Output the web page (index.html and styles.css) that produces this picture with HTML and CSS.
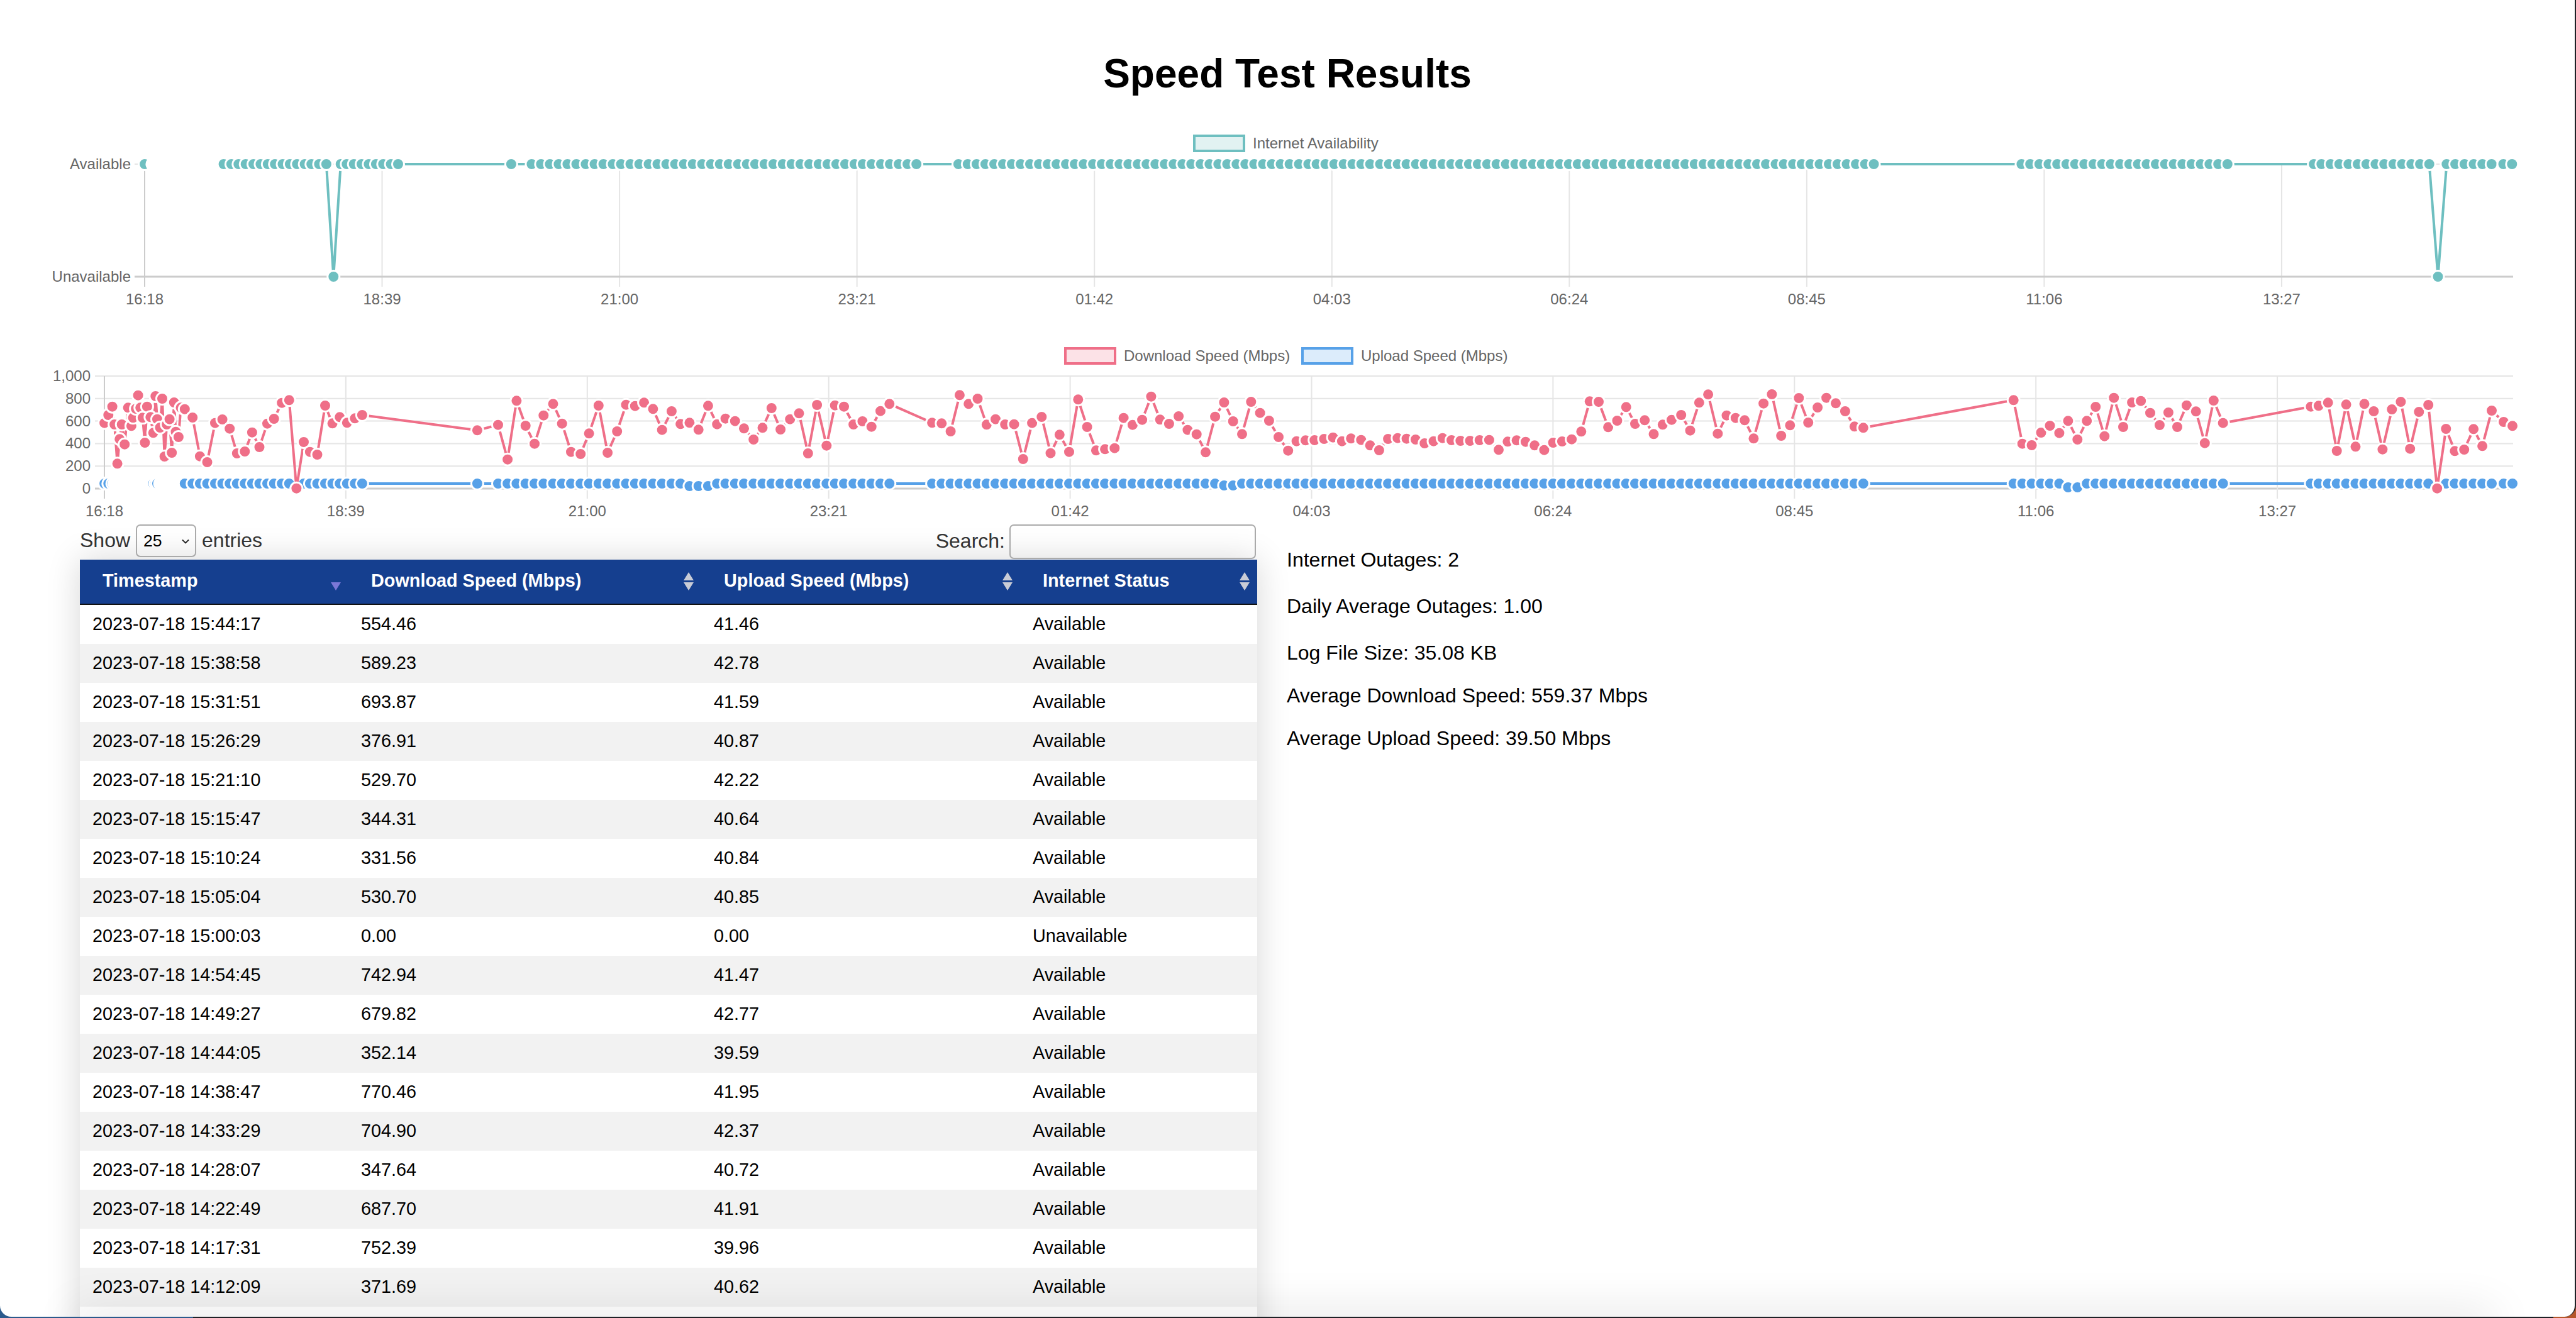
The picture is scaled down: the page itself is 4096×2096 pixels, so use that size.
FILE: index.html
```html
<!DOCTYPE html>
<html lang="en">
<head>
    <meta charset="UTF-8">
    <title>Speed Test Results</title>
    <link rel="stylesheet" href="styles.css">
</head>
<body>
    <div class="window">
        <h1>Speed Test Results</h1>

        <div id="availabilityChart" class="chart chart-availability"></div>
        <div id="speedChart" class="chart chart-speed"></div>

        <div class="content">
            <div class="results">
                <div class="results-top">
                    <label class="results-length">Show
                        <span class="select-wrap">
                            <select>
                                <option>25</option>
                                <option>50</option>
                                <option>100</option>
                            </select>
                            <svg class="select-arrow" viewBox="0 0 12 8" width="12" height="8"><path d="M1 1.5 L6 6.5 L11 1.5" fill="none" stroke="#222" stroke-width="1.8"/></svg>
                        </span>
                        entries</label>
                    <label class="results-search">Search: <input type="search"></label>
                </div>
                <table class="results-table">
                    <colgroup>
                        <col class="col-time">
                        <col class="col-download">
                        <col class="col-upload">
                        <col class="col-status">
                    </colgroup>
                    <thead>
                        <tr>
                            <th class="sorted">Timestamp</th>
                            <th>Download Speed (Mbps)</th>
                            <th>Upload Speed (Mbps)</th>
                            <th>Internet Status</th>
                        </tr>
                    </thead>
                    <tbody>
                        <tr><td>2023-07-18 15:44:17</td><td>554.46</td><td>41.46</td><td>Available</td></tr>
                        <tr><td>2023-07-18 15:38:58</td><td>589.23</td><td>42.78</td><td>Available</td></tr>
                        <tr><td>2023-07-18 15:31:51</td><td>693.87</td><td>41.59</td><td>Available</td></tr>
                        <tr><td>2023-07-18 15:26:29</td><td>376.91</td><td>40.87</td><td>Available</td></tr>
                        <tr><td>2023-07-18 15:21:10</td><td>529.70</td><td>42.22</td><td>Available</td></tr>
                        <tr><td>2023-07-18 15:15:47</td><td>344.31</td><td>40.64</td><td>Available</td></tr>
                        <tr><td>2023-07-18 15:10:24</td><td>331.56</td><td>40.84</td><td>Available</td></tr>
                        <tr><td>2023-07-18 15:05:04</td><td>530.70</td><td>40.85</td><td>Available</td></tr>
                        <tr><td>2023-07-18 15:00:03</td><td>0.00</td><td>0.00</td><td>Unavailable</td></tr>
                        <tr><td>2023-07-18 14:54:45</td><td>742.94</td><td>41.47</td><td>Available</td></tr>
                        <tr><td>2023-07-18 14:49:27</td><td>679.82</td><td>42.77</td><td>Available</td></tr>
                        <tr><td>2023-07-18 14:44:05</td><td>352.14</td><td>39.59</td><td>Available</td></tr>
                        <tr><td>2023-07-18 14:38:47</td><td>770.46</td><td>41.95</td><td>Available</td></tr>
                        <tr><td>2023-07-18 14:33:29</td><td>704.90</td><td>42.37</td><td>Available</td></tr>
                        <tr><td>2023-07-18 14:28:07</td><td>347.64</td><td>40.72</td><td>Available</td></tr>
                        <tr><td>2023-07-18 14:22:49</td><td>687.70</td><td>41.91</td><td>Available</td></tr>
                        <tr><td>2023-07-18 14:17:31</td><td>752.39</td><td>39.96</td><td>Available</td></tr>
                        <tr><td>2023-07-18 14:12:09</td><td>371.69</td><td>40.62</td><td>Available</td></tr>
                        <tr class="row-cut"><td></td><td></td><td></td><td></td></tr>
                    </tbody>
                </table>
            </div>

            <div class="stats">
                <p class="stat-wide">Internet Outages: 2</p>
                <p class="stat-wide">Daily Average Outages: 1.00</p>
                <p>Log File Size: 35.08 KB</p>
                <p>Average Download Speed: 559.37 Mbps</p>
                <p>Average Upload Speed: 39.50 Mbps</p>
            </div>
        </div>
    </div>

    <script src="charts.js"></script>
</body>
</html>
```
FILE: styles.css
```css
html, body {
    height: 100%;
}

body {
    margin: 0;
    overflow: hidden;
    font-family: "Liberation Sans", Arial, sans-serif;
    font-size: 32px;
    color: #000;
    /* desktop behind the window, seen at the corners and along the bottom */
    background: linear-gradient(90deg, #2b5a8c 0 307px, #1e2126 307px 4060px, #b5562a 4060px);
}

.window {
    position: relative;
    box-sizing: border-box;
    width: 4096px;
    height: 2094px;
    overflow: hidden;
    background-color: #fff;
    border-right: 2px solid #1e2126;
    border-radius: 0 0 18px 18px;
}

/* shadow from whatever sits just under the window */
.window::after {
    content: "";
    position: absolute;
    top: 100%;
    left: 120px;
    right: 130px;
    height: 20px;
    box-shadow: 0 0 70px rgba(0, 0, 0, 0.22);
}

h1 {
    margin: 0;
    padding-top: 80px;
    font-size: 64px;
    line-height: 74px;
    text-align: center;
}

.chart svg {
    display: block;
}

.chart text {
    font-family: "Liberation Sans", Arial, sans-serif;
    font-size: 24px;
    fill: #666;
}

.chart-availability {
    margin-top: 46px;
    height: 320px;
}

.chart-speed {
    margin-top: 20px;
    height: 294px;
}

.content {
    display: flex;
    gap: 47px;
    padding-left: 127px;
}

.results {
    width: 1872px;
    flex: none;
}

.results-top {
    display: flex;
    justify-content: space-between;
    height: 56px;
    color: #333;
}

.results-length {
    display: flex;
    align-items: flex-start;
    gap: 9px;
    line-height: 50px;
}

.select-wrap {
    position: relative;
    display: block;
}

.select-wrap select {
    display: block;
    box-sizing: border-box;
    width: 96px;
    height: 52px;
    padding: 0 0 0 10px;
    appearance: none;
    background: transparent;
    border: 2px solid #aaa;
    border-radius: 7px;
    font-family: inherit;
    font-size: 26.67px;
    color: #000;
}

.select-arrow {
    position: absolute;
    top: 23px;
    left: 73px;
}

.results-search {
    display: flex;
    align-items: flex-start;
    gap: 7px;
    line-height: 52px;
}

.results-search input {
    box-sizing: border-box;
    width: 392px;
    height: 55px;
    margin-right: 2px;
    background: transparent;
    border: 2px solid #aaa;
    border-radius: 7px;
}

.results-table {
    width: 100%;
    table-layout: fixed;
    border-collapse: separate;
    border-spacing: 0;
    font-size: 28.8px;
    box-shadow: 0 0 50px rgba(0, 0, 0, 0.16);
}

.col-time { width: 427px; }
.col-download { width: 561px; }
.col-upload { width: 507px; }
.col-status { width: 377px; }

.results-table th {
    position: relative;
    box-sizing: border-box;
    height: 72px;
    padding: 0 36px 4px;
    background-color: #153f8f;
    border-bottom: 2px solid #111;
    color: #fff;
    text-align: left;
}

.results-table th::before,
.results-table th::after {
    content: "";
    position: absolute;
    right: 12px;
    border-left: 8px solid transparent;
    border-right: 8px solid transparent;
}

.results-table th::before {
    top: 20px;
    border-bottom: 13px solid #c9ccd6;
}

.results-table th::after {
    top: 36px;
    border-top: 13px solid #c9ccd6;
}

.results-table th.sorted::before {
    display: none;
}

.results-table th.sorted::after {
    border-top-color: #7b78d8;
}

.results-table td {
    box-sizing: border-box;
    height: 62px;
    padding: 0 20px 2px;
    background-color: #fff;
}

.results-table tbody tr:nth-child(even) td {
    background-color: #f2f2f2;
}

.results-table .row-cut td {
    background-color: #fff;
}

.stats {
    padding-top: 38px;
}

.stats p {
    margin: 0 0 31px;
    line-height: 37px;
}

.stats .stat-wide {
    margin-bottom: 37px;
}
```
FILE: charts.js
```javascript
// Each stretch has its own left edge and px scale, y values are 3x the px offset from 520.
var stretches = [
    { left: 0, scale: 1.12, points: [
        [186,458],[193,420],[200,380],[204,465],[209,652],[213,535],[217,465],[222,560],[228,385],[234,472],
        [237,433],[242,390],[246,326],[250,385],[254,433],[258,552],[262,380],[268,430],[273,505],[277,330],
        [280,440],[285,480],[289,342],[293,618],[297,465],[302,440],[306,600],[310,360],[313,500],[318,525],
        [322,385],[329,392],[343,432],[356,617],[369,645],[383,458],[396,441],[409,485],[422,603],[436,594],
        [449,503],[462,573],[476,461],[488,438],[502,362],[515,349],[528,770],[541,549],[552,596],[565,609],
        [579,375],[592,460],[605,430],[618,457],[632,436],[645,420],[850,493],[887,467],[904,632],[920,352],
        [936,471],[952,557],[968,422],[985,367],[1001,461],[1017,596],[1034,606],[1049,508],[1066,375],[1082,600],
        [1099,498],[1115,371],[1131,377],[1147,361],[1163,391],[1179,491],[1196,402],[1212,463],[1228,457],[1244,490],
        [1261,376],[1277,464],[1292,437],[1309,449],[1325,484],[1342,537],[1358,481],[1374,387],[1390,489],[1407,440],
        [1423,412],[1439,603],[1455,372],[1472,566],[1487,374],[1503,380],[1520,465],[1536,450],[1552,476],[1568,401]
    ] },
    { left: 1400, scale: 1.12, points: [
        [16,367],[92,457],[109,460],[125,498],[141,325],[157,367],[173,342],[189,466],[205,440],[222,465],
        [238,464],[254,630],[270,458],[287,429],[303,602],[319,514],[336,596],[352,346],[368,477],[384,589],
        [400,583],[417,578],[433,434],[449,467],[466,443],[482,332],[498,442],[514,462],[531,426],[547,491],
        [563,512],[579,598],[596,428],[612,360],[628,450],[644,511],[660,357],[676,410],[692,447],[709,525],
        [726,590],[741,545],[757,541],[773,540],[790,534],[806,527],[822,545],[838,532],[856,539],[872,565],
        [888,588],[904,534],[921,530],[937,533],[953,537],[969,555],[985,545],[1001,530],[1017,540],[1033,543],
        [1050,543],[1067,540],[1084,539],[1101,586],[1117,547],[1133,541],[1149,548],[1165,565],[1182,587],[1198,552],
        [1214,546],[1231,536],[1248,499],[1263,355],[1279,357],[1296,478],[1312,447],[1328,382],[1344,462],[1361,445],
        [1377,511],[1393,466],[1409,443],[1426,420],[1442,494],[1458,361],[1474,322],[1491,509],[1507,422],[1523,434],
        [1539,445],[1555,532]
    ] },
    { left: 2800, scale: 1.21, points: [
        [5,365],[21,321],[39,519],[56,469],[73,339],[91,456],[109,384],[126,338],[144,364],[162,402],
        [180,475],[197,481],[486,349],[503,557],[521,564],[539,504],[556,471],[574,506],[591,448],[609,537],
        [627,448],[644,381],[661,521],[679,338],[697,477],[714,360],[731,353],[749,410],[767,468],[784,408],
        [801,477],[819,374],[837,403],[854,554],[871,351],[889,458],[1058,380],[1073,376],[1091,361],[1108,591],
        [1126,370],[1144,571],[1161,367],[1179,402],[1196,584],[1214,393],[1231,357],[1249,581],[1266,405],[1284,372],
        [1301,770],[1318,486],[1335,592],[1353,585],[1371,487],[1388,568],[1406,399],[1429,453],[1446,472]
    ] }
];

var TEAL = '#6ebfc0';
var PINK = '#ef6f88';
var BLUE = '#57a1e8';
var GRID = '#e5e5e5';
var AXIS = '#cccccc';
var TIMES = ['16:18', '18:39', '21:00', '23:21', '01:42', '04:03', '06:24', '08:45', '11:06', '13:27'];

// the first few minutes of the log drew as blank dots
var BLANK_UNTIL = 288;

var samples = [];
stretches.forEach(function (s) {
    s.points.forEach(function (p) {
        samples.push({ x: s.left + p[0] / s.scale, y: 520 + p[1] / 3 });
    });
});

function line(x1, y1, x2, y2, color, width) {
    return '<line x1="' + x1 + '" y1="' + y1 + '" x2="' + x2 + '" y2="' + y2 + '" stroke="' + color + '" stroke-width="' + width + '"/>';
}

function label(x, y, text, anchor) {
    return '<text x="' + x + '" y="' + y + '" text-anchor="' + anchor + '">' + text + '</text>';
}

function series(points, color) {
    var path = points.map(function (p) { return p.x.toFixed(1) + ',' + p.y.toFixed(1); }).join(' ');
    var out = '<polyline points="' + path + '" fill="none" stroke="' + color + '" stroke-width="4"/>';
    points.forEach(function (p) {
        if (p.skip) return;
        out += '<circle cx="' + p.x.toFixed(1) + '" cy="' + p.y.toFixed(1) + '" r="9.5" stroke="#fff" stroke-width="3" fill="' + (p.blank ? '#fff' : color) + '"/>';
    });
    return out;
}

function legendBox(x, y, color, fill, text) {
    return '<rect x="' + (x + 2) + '" y="' + (y + 2) + '" width="79" height="24" fill="' + fill + '" stroke="' + color + '" stroke-width="4"/>' +
        label(x + 95, y + 22, text, 'start');
}

function svg(top, height, body) {
    return '<svg width="4096" height="' + height + '" viewBox="0 ' + top + ' 4096 ' + height + '">' + body + '</svg>';
}

// upload speed barely moves, only a few dips
function uploadY(s) {
    if (s.y > 770) return 777;
    if (s.x > 1090 && s.x < 1130) return 773;
    if (s.x > 1940 && s.x < 1965) return 772;
    if (s.x > 3285 && s.x < 3306) return 775;
    return 769;
}

function drawAvailability() {
    var body = '';
    TIMES.forEach(function (t, i) {
        var x = 230 + i * 377.55;
        body += line(x, 261, x, 456, i === 0 ? AXIS : GRID, 2);
        body += label(x, 484, t, 'middle');
    });
    body += line(214, 261, 3996, 261, GRID, 2);
    body += line(214, 440, 3996, 440, AXIS, 3);
    body += label(208, 269, 'Available', 'end');
    body += label(208, 448, 'Unavailable', 'end');
    body += legendBox(1897, 214, TEAL, '#e2f2f2', 'Internet Availability');

    var points = samples.map(function (s, i) {
        return {
            x: 230 + (s.x - 166) * 0.9831,
            y: s.y > 770 ? 440 : 261,
            skip: i > 0 && s.x < 175,
            blank: i > 0 && s.x < BLANK_UNTIL
        };
    });
    body += series(points, TEAL);
    document.getElementById('availabilityChart').innerHTML = svg(200, 320, body);
}

function drawSpeed() {
    var body = '';
    ['1,000', '800', '600', '400', '200', '0'].forEach(function (t, i) {
        var y = 598 + i * 35.8;
        body += line(151, y, 3996, y, t === '0' ? AXIS : GRID, t === '0' ? 3 : 2);
        body += label(144, y + 8, t, 'end');
    });
    TIMES.forEach(function (t, i) {
        var x = 166 + i * 383.9;
        body += line(x, 598, x, 793, i === 0 ? AXIS : GRID, 2);
        body += label(x, 821, t, 'middle');
    });
    body += legendBox(1692, 552, PINK, '#fce2e7', 'Download Speed (Mbps)');
    body += legendBox(2069, 552, BLUE, '#dcecfb', 'Upload Speed (Mbps)');

    var upload = samples.map(function (s) {
        var keep = s.x < 180 || (s.x > 243 && s.x < 252);
        return { x: s.x, y: uploadY(s), blank: s.x < BLANK_UNTIL && !keep };
    });
    body += series(upload, BLUE);
    body += series(samples, PINK);
    document.getElementById('speedChart').innerHTML = svg(540, 294, body);
}

drawAvailability();
drawSpeed();
```
